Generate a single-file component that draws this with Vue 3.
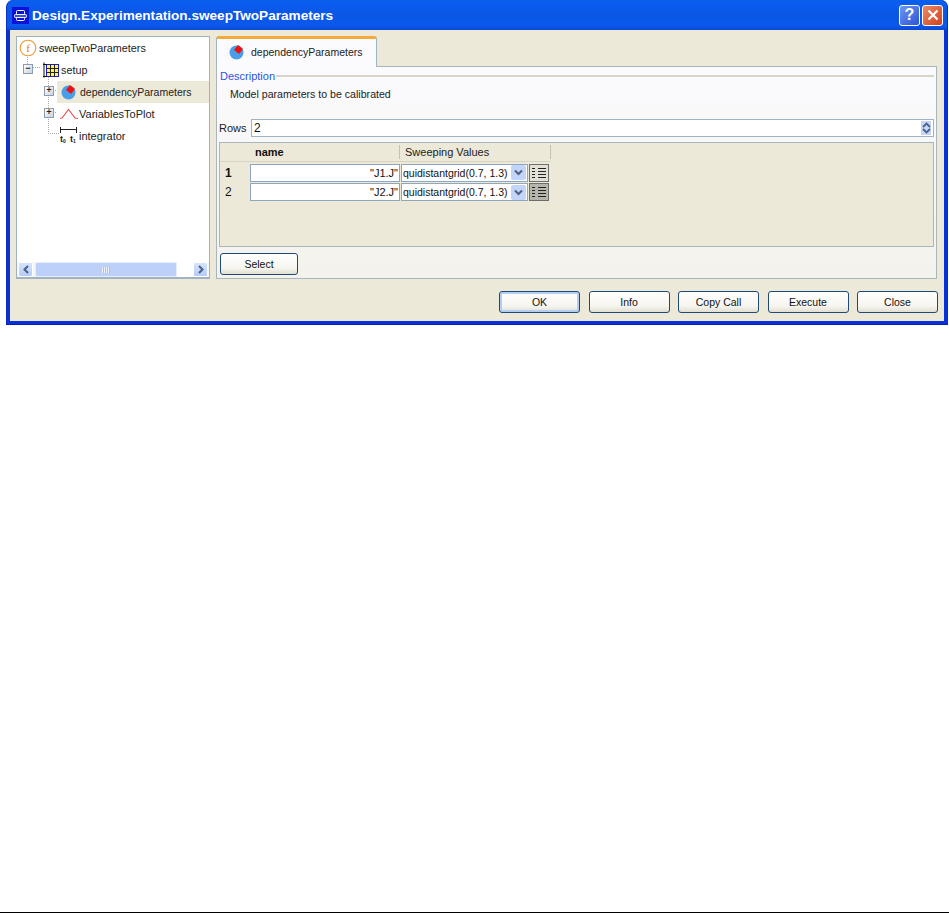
<script setup>
const actions = [
  { label: 'OK', primary: true },
  { label: 'Info' },
  { label: 'Copy Call' },
  { label: 'Execute' },
  { label: 'Close' }
]
const rows = [
  { id: 1, name: '"J1.J"', value: 'quidistantgrid(0.7, 1.3)', current: true },
  { id: 2, name: '"J2.J"', value: 'quidistantgrid(0.7, 1.3)', current: false }
]
</script>

<template>
  <div class="page">
    <div class="window">
      <header class="titlebar">
        <svg class="app-icon" width="17" height="17" viewBox="0 0 17 17">
          <rect width="17" height="17" fill="#0a14d8" />
          <rect x="4.500" y="3.500" width="8" height="4" rx="1" fill="#0a14d8" stroke="#fff" />
          <rect x="2.500" y="7.500" width="12" height="3" rx="1" fill="#3a50ee" stroke="#fff" />
          <rect x="4.500" y="10.500" width="8" height="3" rx="1" fill="#0a14d8" stroke="#fff" />
        </svg>
        <span class="title">Design.Experimentation.sweepTwoParameters</span>
        <button class="cap help">?</button>
        <button class="cap close">
          <svg width="12" height="12" viewBox="0 0 12 12"><path d="M1.500 1.500l9 9M10.500 1.500l-9 9" stroke="#fff" stroke-width="2.200" /></svg>
        </button>
      </header>

      <div class="body">
        <div class="main">
          <aside class="tree-panel">
            <div class="tree">
              <svg class="connectors" width="192" height="226" viewBox="0 0 192 226">
                <path d="M10.500 20V27M16 30.500h7M31.500 40V96.500H43M36 53.500h4M36 75.500h4" fill="none" stroke="#a8a8a8" stroke-dasharray="1 1" />
              </svg>
              <div class="node l0">
                <svg width="18" height="18" viewBox="0 0 18 18" class="ico">
                  <circle cx="9" cy="9" r="7.800" fill="#fff" stroke="#f39a2e" stroke-width="1.100" />
                  <text x="9" y="13" text-anchor="middle" font-size="11" font-family="Liberation Serif" fill="#e07f12">f</text>
                </svg>
                <span class="tight">sweepTwoParameters</span>
              </div>
              <div class="node l1">
                <i class="exp">−</i>
                <svg width="16" height="16" viewBox="0 0 16 16" class="ico">
                  <rect x="3.500" y="2.500" width="12" height="12" fill="#fff25a" stroke="#1a1ae0" />
                  <path d="M7.500 2.500v12M11.500 2.500v12M3.500 6.500h12M3.500 10.500h12" stroke="#222" />
                  <path d="M1 .5v15M0 2.500h4M0 14.500h4" stroke="#111" fill="none" />
                </svg>
                <span class="tight">setup</span>
              </div>
              <div class="node l2">
                <i class="exp">+</i>
                <div class="sel">
                  <svg width="16" height="16" viewBox="0 0 16 16" class="ico">
                    <circle cx="7.500" cy="8.500" r="7" fill="#4a9ee8" />
                    <path d="M9 1L14 5 10 10 5 6z" fill="#f01010" />
                  </svg>
                  <span class="narrow">dependencyParameters</span>
                </div>
              </div>
              <div class="node l2">
                <i class="exp">+</i>
                <svg width="18" height="12" viewBox="0 0 18 12" class="ico wave">
                  <path d="M0 10.500L2 10 8.500 1.500 15 10 18 10.500" fill="none" stroke="#ef4a4a" stroke-width="1.100" />
                </svg>
                <span>VariablesToPlot</span>
              </div>
              <div class="node l3">
                <svg width="18" height="20" viewBox="0 0 18 20" class="ico">
                  <path d="M0.500 1V7M16.500 1V7M0.500 3.500H16.500" stroke="#222" fill="none" />
                  <text x="0" y="16" font-size="9" font-weight="700" font-family="Liberation Sans" fill="#222">t</text>
                  <text x="3" y="17" font-size="5" font-weight="700" font-family="Liberation Sans" fill="#222">0</text>
                  <text x="10" y="16" font-size="9" font-weight="700" font-family="Liberation Sans" fill="#222">t</text>
                  <text x="13" y="17" font-size="5" font-weight="700" font-family="Liberation Sans" fill="#222">1</text>
                </svg>
                <span>integrator</span>
              </div>
            </div>
            <div class="hscroll">
              <button class="sb-btn">
                <svg width="8" height="9" viewBox="0 0 8 9"><path d="M6 1L2.500 4.500 6 8" fill="none" stroke="#4d6185" stroke-width="2" /></svg>
              </button>
              <div class="sb-thumb"><i></i></div>
              <div class="sb-track"></div>
              <button class="sb-btn">
                <svg width="8" height="9" viewBox="0 0 8 9"><path d="M2 1l3.500 3.500L2 8" fill="none" stroke="#4d6185" stroke-width="2" /></svg>
              </button>
            </div>
          </aside>

          <section class="content">
            <div class="tabs">
              <div class="tab">
                <svg width="16" height="16" viewBox="0 0 16 16">
                  <circle cx="7.500" cy="8.500" r="7" fill="#4a9ee8" />
                  <path d="M9 1L14 5 10 10 5 6z" fill="#f01010" />
                </svg>
                <span class="narrow">dependencyParameters</span>
              </div>
            </div>
            <div class="tab-body">
              <div class="legend"><span>Description</span><i></i></div>
              <p class="desc">Model parameters to be calibrated</p>
              <div class="rows-line">
                <label>Rows</label>
                <div class="rows-input">
                  <span>2</span>
                  <div class="spin">
                    <svg width="9" height="6" viewBox="0 0 9 6"><path d="M1 5l3.500-3.500L8 5" fill="none" stroke="#4d6185" stroke-width="1.800" /></svg>
                    <svg width="9" height="6" viewBox="0 0 9 6"><path d="M1 1l3.500 3.500L8 1" fill="none" stroke="#4d6185" stroke-width="1.800" /></svg>
                  </div>
                </div>
              </div>
              <div class="grid-box">
                <div class="grid-head">
                  <div class="corner"></div>
                  <div class="h-name">name</div>
                  <div class="h-val">Sweeping Values</div>
                </div>
                <div v-for="r in rows" :key="r.id" class="grid-row">
                  <div class="r-id" :class="{ bold: r.current }">{{ r.id }}</div>
                  <div class="r-name">{{ r.name }}</div>
                  <div class="r-combo">
                    <span>{{ r.value }}</span>
                    <div class="dd">
                      <svg width="9" height="7" viewBox="0 0 9 7"><path d="M1 1.500l3.500 3.500L8 1.500" fill="none" stroke="#4d6185" stroke-width="2" /></svg>
                    </div>
                  </div>
                  <button class="list-btn" :class="{ pressed: !r.current }">
                    <svg width="16" height="12" viewBox="0 0 16 12">
                      <path d="M1 1.500h3M1 4.500h3M1 7.500h3M1 10.500h3M7 1.500h8M7 4.500h8M7 7.500h8M7 10.500h8" stroke="#222" />
                    </svg>
                  </button>
                </div>
              </div>
              <div class="select-line">
                <button class="btn select">Select</button>
              </div>
            </div>
          </section>
        </div>
        <footer class="actions">
          <button v-for="a in actions" :key="a.label" class="btn act" :class="{ primary: a.primary }">{{ a.label }}</button>
        </footer>
      </div>
    </div>
    <div class="baseline"></div>
  </div>
</template>

<style>
html, body { margin: 0; background: #fff; }
</style>

<style scoped>
.page {
  height: 913px;
  width: 949px;
  display: flex;
  flex-direction: column;
  font-family: "Liberation Sans", Arial, sans-serif;
  font-size: 11px;
  color: #111;
  overflow: hidden;
}
.window {
  margin-left: 6px;
  width: 942px;
  height: 325px;
  box-sizing: border-box;
  border-radius: 7px 7px 0 0;
  background: #0831d9;
  display: flex;
  flex-direction: column;
  border-left: 1px solid #0a2fc0;
  border-right: 1px solid #0a2fc0;
  border-bottom: 1px solid #0a1fb0;
}
.titlebar {
  height: 30px;
  flex: none;
  display: flex;
  align-items: center;
  padding: 0 4px 0 5px;
  border-radius: 7px 7px 0 0;
  background: linear-gradient(180deg, #0a60e8 0%, #0a5cf0 12%, #0b56e4 50%, #0a58ee 85%, #0a48d0 100%);
}
.app-icon { flex: none; }
.title {
  margin-left: 3px;
  color: #fff;
  font-weight: 700;
  font-size: 13.600px;
  flex: 1;
  white-space: nowrap;
}
.cap {
  width: 21px;
  height: 21px;
  padding: 0;
  box-sizing: border-box;
  border: 1px solid #fff;
  border-radius: 3px;
  margin-left: 2px;
  display: flex;
  align-items: center;
  justify-content: center;
}
.help {
  background: linear-gradient(135deg, #6f96f0, #2c54d6);
  color: #fff;
  font: 700 16px "Liberation Sans", sans-serif;
}
.close { background: linear-gradient(135deg, #ea8a68, #d2401c); }
.body {
  flex: 1;
  margin: 0 3px 3px;
  background: #ece9d8;
  display: flex;
  flex-direction: column;
  padding: 6px 7px 8px 6px;
  min-height: 0;
}
.main {
  flex: 1;
  display: flex;
  gap: 6px;
  min-height: 0;
}
.tree-panel {
  width: 194px;
  box-sizing: border-box;
  border: 1px solid #9fb3c4;
  border-bottom-width: 2px;
  background: #fff;
  display: flex;
  flex-direction: column;
}
.tree {
  position: relative;
  flex: 1;
  display: flex;
  flex-direction: column;
}
.connectors { position: absolute; left: 0; top: 0; }
.node {
  position: relative;
  height: 22px;
  display: flex;
  align-items: center;
  white-space: nowrap;
  color: #222;
}
.tight { font-size: 10.800px; }
.narrow { font-size: 10.500px; }
.l0 { padding-left: 2px; }
.l0 .ico { margin-right: 2px; }
.l1 { padding-left: 6px; }
.l1 .ico { margin: 0 2px 0 10px; }
.l2 { padding-left: 27px; }
.l3 { padding-left: 43px; box-sizing: border-box; }
.l3 .ico { margin-right: 1px; }
.exp {
  width: 10px;
  height: 10px;
  box-sizing: border-box;
  border: 1px solid #8a9db5;
  background: linear-gradient(135deg, #fff, #c9d2dc);
  font: 700 9px/8px "Liberation Mono", monospace;
  text-align: center;
  flex: none;
  margin-top: -3px;
}
.sel {
  margin-left: 3px;
  flex: 1;
  height: 22px;
  background: #ece9d8;
  display: flex;
  align-items: center;
  padding-left: 4px;
}
.sel .ico { margin-right: 3px; }
.wave { margin: 0 1px 0 6px; }
.hscroll {
  height: 15px;
  flex: none;
  display: flex;
  padding: 0 1px;
  background: #f5f4ee;
}
.sb-btn {
  width: 15px;
  height: 15px;
  padding: 0;
  border: 1px solid #fff;
  border-radius: 2px;
  background: linear-gradient(180deg, #d6e3fd, #b6ccf8);
  display: flex;
  align-items: center;
  justify-content: center;
  flex: none;
}
.sb-thumb {
  width: 142px;
  margin-left: 2px;
  background: #bcd0f9;
  border: 1px solid #e6eefc;
  box-sizing: border-box;
  border-radius: 2px;
  display: flex;
  align-items: center;
  justify-content: center;
}
.sb-thumb i {
  width: 8px;
  height: 6px;
  background: repeating-linear-gradient(90deg, #eef3fe 0 1px, #a8c0ef 1px 2px);
}
.sb-track { flex: 1; background: #fff; }
.content {
  flex: 1;
  display: flex;
  flex-direction: column;
  min-width: 0;
}
.tabs {
  height: 30px;
  flex: none;
  display: flex;
}
.tab {
  width: 161px;
  box-sizing: border-box;
  height: 31px;
  position: relative;
  z-index: 1;
  background: #fbfbfd;
  border: 1px solid #9fb3c4;
  border-bottom: 0;
  border-top: 3px solid #f4a93a;
  border-radius: 3px 3px 0 0;
  display: flex;
  align-items: center;
  gap: 6px;
  padding-left: 12px;
  padding-bottom: 2px;
  color: #222;
}
.tab-body {
  flex: 1;
  box-sizing: border-box;
  border: 1px solid #a9b6bd;
  background: linear-gradient(180deg, #fbfbfe, #f3f2ec);
  padding: 0 2px 2px;
  display: flex;
  flex-direction: column;
  min-height: 0;
}
.legend {
  height: 18px;
  display: flex;
  align-items: center;
  gap: 1px;
  color: #2a55e0;
  padding-left: 1px;
}
.legend i { flex: 1; height: 2px; background: #d8d4c8; }
.desc {
  margin: 0;
  height: 20px;
  line-height: 19px;
  padding-left: 11px;
  color: #222;
  font-size: 10.600px;
}
.rows-line {
  margin-top: 14px;
  display: flex;
  align-items: center;
  gap: 4px;
  height: 18px;
}
.rows-line label { width: 28px; color: #222; }
.rows-input {
  flex: 1;
  height: 18px;
  box-sizing: border-box;
  border: 1px solid #9fb3c4;
  background: #fff;
  display: flex;
  align-items: center;
  justify-content: space-between;
  padding-left: 2px;
  font-size: 12px;
}
.spin {
  width: 10px;
  height: 14px;
  margin-right: 2px;
  background: #c6d6f8;
  display: flex;
  flex-direction: column;
  align-items: center;
  justify-content: center;
}
.grid-box {
  margin-top: 5px;
  height: 105px;
  box-sizing: border-box;
  border: 1px solid #a9b6bd;
  background: #ece9d8;
}
.grid-head {
  display: flex;
  height: 18px;
  align-items: center;
  width: 331px;
  border-bottom: 1px solid #d8d4c4;
}
.corner { width: 30px; }
.h-name { width: 150px; padding-left: 5px; box-sizing: border-box; font-weight: 700; border-right: 1px solid #c6c2b0; height: 14px; line-height: 14px; }
.h-val { flex: 1; padding-left: 5px; box-sizing: border-box; border-right: 1px solid #c6c2b0; height: 14px; line-height: 14px; color: #222; }
.grid-row {
  display: flex;
  align-items: center;
  height: 18px;
  margin-top: 1.500px;
  width: 331px;
}
.r-id { width: 30px; padding-left: 5px; box-sizing: border-box; font-size: 12px; }
.r-id.bold { font-weight: 700; }
.r-name {
  width: 150px;
  height: 18px;
  box-sizing: border-box;
  border: 1px solid #8fa6bf;
  background: #fff;
  text-align: right;
  line-height: 16px;
  padding-right: 1px;
}
.r-combo {
  width: 127px;
  height: 18px;
  box-sizing: border-box;
  margin-left: 1px;
  border: 1px solid #8fa6bf;
  background: #fff;
  display: flex;
  align-items: center;
  justify-content: space-between;
  padding-left: 1px;
  white-space: nowrap;
  overflow: hidden;
  font-size: 10.500px;
}
.dd {
  width: 15px;
  height: 15px;
  margin-right: 1px;
  background: #c2d4f7;
  display: flex;
  align-items: center;
  justify-content: center;
  border-radius: 2px;
  flex: none;
}
.list-btn {
  width: 20px;
  height: 18px;
  margin-left: 1px;
  padding: 0;
  box-sizing: border-box;
  border: 1px solid #6e6e6e;
  background: #e3e1d6;
  display: flex;
  align-items: center;
  justify-content: center;
}
.list-btn.pressed { background: #b5b5ad; }
.select-line { margin-top: 6px; display: flex; padding-left: 1px; }
.btn {
  box-sizing: border-box;
  border: 1px solid #1f4a75;
  border-radius: 3px;
  background: linear-gradient(180deg, #fff 0%, #f6f5ef 70%, #e2dfd2 100%);
  font: 10.500px "Liberation Sans", Arial, sans-serif;
  color: #111;
  padding: 0;
  height: 22px;
  width: 81px;
}
.select { width: 78px; height: 22px; }
.actions {
  flex: none;
  display: flex;
  justify-content: flex-end;
  gap: 8.500px;
  padding-top: 12px;
  margin-right: -1px;
}
.primary { box-shadow: inset 0 0 0 2px #b4cdf2; }
.baseline {
  margin-top: auto;
  height: 1px;
  background: #000;
  flex: none;
}
</style>
